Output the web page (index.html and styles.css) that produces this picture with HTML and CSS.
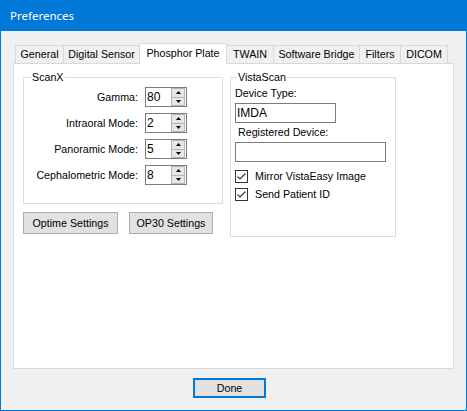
FILE: index.html
```html
<!DOCTYPE html>
<html>
<head>
<meta charset="utf-8">
<title>Preferences</title>
<link rel="stylesheet" href="styles.css">
</head>
<body>
<div class="window">
  <div class="titlebar">Preferences</div>
  <div class="body">
    <div class="tabcontrol">
      <div class="tabs">
        <div class="tab tab-first w-general">General</div>
        <div class="tab w-digital">Digital Sensor</div>
        <div class="tab tab-active w-phosphor">Phosphor Plate</div>
        <div class="tab w-twain">TWAIN</div>
        <div class="tab w-software">Software Bridge</div>
        <div class="tab w-filters">Filters</div>
        <div class="tab w-dicom">DICOM</div>
      </div>
      <div class="panel">
        <div class="col-left">
          <div class="group group-scanx">
            <div class="group-title title-scanx">ScanX</div>
            <div class="rows">
              <div class="row">
                <span class="row-label">Gamma:</span>
                <div class="spin">
                  <span class="spin-val">80</span>
                  <div class="spin-btns">
                    <span class="spin-btn"><svg width="5" height="3" viewBox="0 0 5 3"><polygon points="2.5,0 5,3 0,3"/></svg></span>
                    <span class="spin-btn"><svg width="5" height="3" viewBox="0 0 5 3"><polygon points="0,0 5,0 2.5,3"/></svg></span>
                  </div>
                </div>
              </div>
              <div class="row">
                <span class="row-label">Intraoral Mode:</span>
                <div class="spin">
                  <span class="spin-val">2</span>
                  <div class="spin-btns">
                    <span class="spin-btn"><svg width="5" height="3" viewBox="0 0 5 3"><polygon points="2.5,0 5,3 0,3"/></svg></span>
                    <span class="spin-btn"><svg width="5" height="3" viewBox="0 0 5 3"><polygon points="0,0 5,0 2.5,3"/></svg></span>
                  </div>
                </div>
              </div>
              <div class="row">
                <span class="row-label">Panoramic Mode:</span>
                <div class="spin">
                  <span class="spin-val">5</span>
                  <div class="spin-btns">
                    <span class="spin-btn"><svg width="5" height="3" viewBox="0 0 5 3"><polygon points="2.5,0 5,3 0,3"/></svg></span>
                    <span class="spin-btn"><svg width="5" height="3" viewBox="0 0 5 3"><polygon points="0,0 5,0 2.5,3"/></svg></span>
                  </div>
                </div>
              </div>
              <div class="row">
                <span class="row-label">Cephalometric Mode:</span>
                <div class="spin">
                  <span class="spin-val">8</span>
                  <div class="spin-btns">
                    <span class="spin-btn"><svg width="5" height="3" viewBox="0 0 5 3"><polygon points="2.5,0 5,3 0,3"/></svg></span>
                    <span class="spin-btn"><svg width="5" height="3" viewBox="0 0 5 3"><polygon points="0,0 5,0 2.5,3"/></svg></span>
                  </div>
                </div>
              </div>
            </div>
          </div>
          <div class="btn-row">
            <button class="btn btn-optime">Optime Settings</button>
            <button class="btn btn-op30">OP30 Settings</button>
          </div>
        </div>
        <div class="group group-vista">
          <div class="group-title title-vista">VistaScan</div>
          <div class="vista-body">
            <div class="field-label">Device Type:</div>
            <div class="textbox tb-device">IMDA</div>
            <div class="field-label field-label-reg">Registered Device:</div>
            <div class="textbox tb-reg"></div>
            <div class="check-row check-first">
              <span class="checkbox"><svg width="11" height="11" viewBox="0 0 11 11"><polyline points="1.5,5.5 4,8 9.5,2.5" fill="none" stroke="#333" stroke-width="1.1"/></svg></span>
              <span>Mirror VistaEasy Image</span>
            </div>
            <div class="check-row check-second">
              <span class="checkbox"><svg width="11" height="11" viewBox="0 0 11 11"><polyline points="1.5,5.5 4,8 9.5,2.5" fill="none" stroke="#333" stroke-width="1.1"/></svg></span>
              <span>Send Patient ID</span>
            </div>
          </div>
        </div>
      </div>
    </div>
    <div class="footer">
      <button class="btn btn-done">Done</button>
    </div>
  </div>
</div>
</body>
</html>
```

FILE: styles.css
```css
* {
  box-sizing: border-box;
}

body {
  margin: 0;
  font-family: "Liberation Sans", Arial, sans-serif;
  font-size: 10.7px;
  line-height: 13px;
  color: #000;
}

.window {
  width: 467px;
  height: 411px;
  border: 1px solid #0078d7;
  border-top: 0;
  background: #f0f0f0;
  display: flex;
  flex-direction: column;
}

.titlebar {
  height: 31px;
  flex: none;
  background: #0078d7;
  color: #fff;
  font-family: "Noto Sans", "Open Sans", sans-serif;
  font-size: 11.5px;
  display: flex;
  align-items: center;
  padding-left: 9px;
}

.body {
  flex: 1;
  display: flex;
  flex-direction: column;
  padding: 12px 0 0 12px;
}

.tabcontrol {
  width: 441px;
}

.tabs {
  display: flex;
  align-items: flex-end;
  height: 20px;
  padding-left: 2px;
}

.tab {
  height: 18px;
  border: 1px solid #d9d9d9;
  border-bottom: 0;
  margin-left: -1px;
  background: #f0f0f0;
  display: flex;
  align-items: center;
  justify-content: center;
  white-space: nowrap;
}

.tab-first {
  margin-left: 0;
}

.tab-active {
  position: relative;
  height: 21px;
  margin-bottom: -1px;
  padding-bottom: 2px;
  background: #fff;
}

.w-general { width: 49px; }
.w-digital { width: 77px; }
.w-phosphor { width: 88px; }
.w-twain { width: 48px; }
.w-software { width: 87px; }
.w-filters { width: 42px; }
.w-dicom { width: 48px; }

.panel {
  height: 306px;
  border: 1px solid #d9d9d9;
  background: #fff;
  display: flex;
  align-items: flex-start;
  gap: 7px;
  padding: 13px 0 0 9px;
}

.col-left {
  width: 200px;
  display: flex;
  flex-direction: column;
  gap: 8px;
}

.group {
  border: 1px solid #dcdcdc;
  display: flex;
  flex-direction: column;
}

.group-scanx {
  width: 200px;
  height: 127px;
}

.group-vista {
  width: 166px;
  height: 160px;
}

.group-title {
  align-self: flex-start;
  margin: -7px 0 -6px 7px;
  padding: 0 1px;
  background: #fff;
  line-height: 13px;
}

.title-vista {
  margin-left: 6px;
}

.rows {
  display: flex;
  flex-direction: column;
  gap: 6px;
  padding-top: 9px;
}

.row {
  display: flex;
  align-items: center;
  height: 20px;
}

.row-label {
  width: 114px;
  text-align: right;
  margin-right: 7px;
  white-space: nowrap;
}

.spin {
  width: 42px;
  height: 20px;
  border: 1px solid #7a7a7a;
  background: #fff;
  display: flex;
}

.spin-val {
  flex: 1;
  font-size: 12px;
  padding-left: 1px;
  display: flex;
  align-items: center;
}

.spin-btns {
  width: 14px;
  margin-right: 1px;
  display: flex;
  flex-direction: column;
}

.spin-btn {
  flex: 1;
  background: #e6e6e6;
  border: 1px solid #b4b4b4;
  display: flex;
  align-items: center;
  justify-content: center;
}

.spin-btn + .spin-btn {
  border-top: 0;
}

.spin-btn svg {
  display: block;
  fill: #000;
}

.btn-row {
  display: flex;
  gap: 11px;
}

.btn {
  height: 22px;
  border: 1px solid #adadad;
  background: #e1e1e1;
  font: inherit;
  color: #000;
  padding: 0;
  margin: 0;
}

.btn-optime { width: 95px; }
.btn-op30 { width: 84px; }

.vista-body {
  display: flex;
  flex-direction: column;
  align-items: flex-start;
  padding: 9px 0 0 4px;
}

.field-label {
  line-height: 13px;
}

.field-label-reg {
  margin-top: 3px;
  margin-left: 3px;
}

.textbox {
  height: 20px;
  margin-top: 3px;
  border: 1px solid #7a7a7a;
  background: #fff;
  font-size: 12px;
  padding-left: 1px;
  display: flex;
  align-items: center;
}

.tb-device { width: 101px; }
.tb-reg { width: 151px; }

.check-row {
  display: flex;
  align-items: center;
  gap: 7px;
  height: 13px;
  white-space: nowrap;
}

.check-first { margin-top: 8px; }
.check-second { margin-top: 5px; }

.checkbox {
  width: 13px;
  height: 13px;
  border: 1px solid #333;
  background: #fff;
  display: flex;
}

.checkbox svg {
  display: block;
}

.footer {
  display: flex;
  padding: 9px 0 0 180px;
}

.btn-done {
  width: 73px;
  height: 20px;
  border: 2px solid #0078d7;
}
```
